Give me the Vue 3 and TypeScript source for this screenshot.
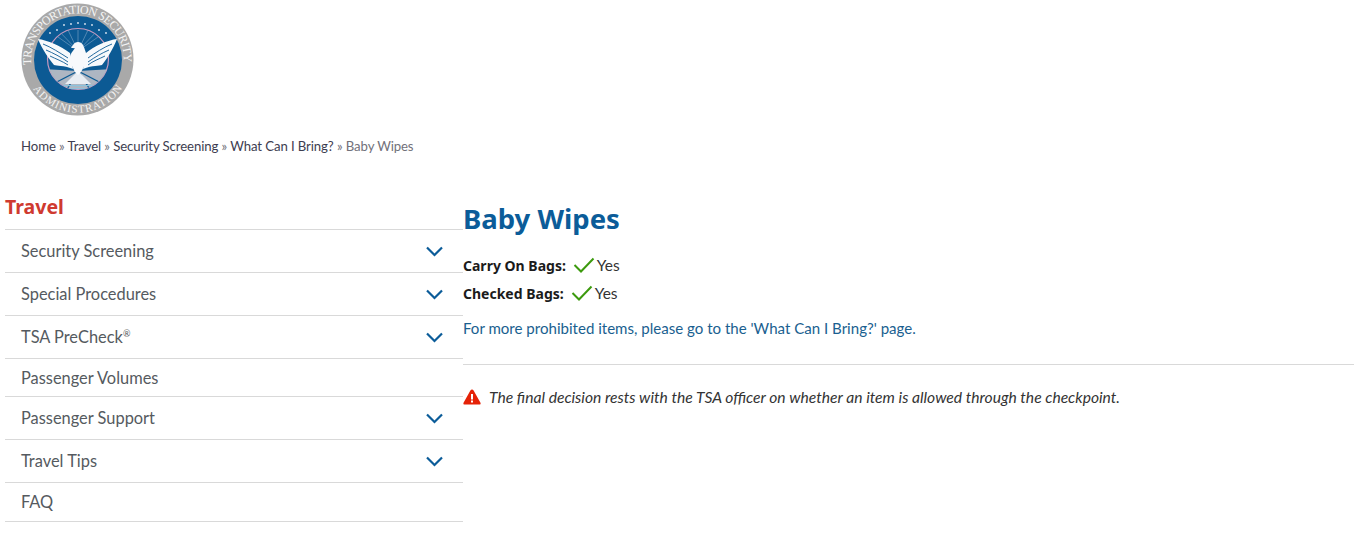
<script setup lang="ts">
interface NavItem { label: string; sup?: string; open: boolean; kind: 'tall' | 'short' | 'last' }
const items: NavItem[] = [
  { label: 'Security Screening', open: true, kind: 'tall' },
  { label: 'Special Procedures', open: true, kind: 'tall' },
  { label: 'TSA PreCheck', sup: '®', open: true, kind: 'tall' },
  { label: 'Passenger Volumes', open: false, kind: 'short' },
  { label: 'Passenger Support', open: true, kind: 'tall' },
  { label: 'Travel Tips', open: true, kind: 'tall' },
  { label: 'FAQ', open: false, kind: 'last' },
]
const crumbs = ['Home', 'Travel', 'Security Screening', 'What Can I Bring?']
const stars = [[-28, 5], [-21, 2], [-14, 0], [-7, -1], [0, -2], [7, -1], [14, 0], [21, 2], [28, 5]]
const rays = [-60, -40, -20, 0, 20, 40, 60]
</script>

<template>
  <div class="page">
    <header class="logo-wrap">
      <svg class="seal" viewBox="0 0 113 113" width="113" height="113" aria-label="Transportation Security Administration seal">
        <defs>
          <path id="arcTop" d="M 10.5 62 A 46.3 46.3 0 1 1 102.5 62" />
          <path id="arcBottom" d="M 11 84 A 53 53 0 0 0 102 84" />
          <clipPath id="inner"><circle cx="57" cy="56" r="30.5" /></clipPath>
        </defs>
        <circle cx="56.5" cy="56.5" r="56" fill="#a9a9a9" />
        <circle cx="57" cy="57" r="44" fill="#0c5a94" />
        <text class="seal-text"><textPath href="#arcTop" textLength="153" lengthAdjust="spacing">TRANSPORTATION SECURITY</textPath></text>
        <text class="seal-text small"><textPath href="#arcBottom" textLength="106" lengthAdjust="spacing" startOffset="2">ADMINISTRATION</textPath></text>
        <g fill="#dfe8f2">
          <circle v-for="(s, i) in stars" :key="i" :cx="57 + s[0]" :cy="22 + s[1] + (Math.abs(s[0]) > 20 ? 3 : 0)" r="0.9" />
        </g>
        <circle cx="57" cy="56" r="30.5" fill="#0c5a94" stroke="#c79ac0" stroke-width="1.2" />
        <g clip-path="url(#inner)">
          <g stroke="#7fa6c8" stroke-width="0.6">
            <line v-for="r in rays" :key="r" x1="57" y1="48" :x2="57 + r * 0.5" y2="27" />
          </g>
          <polygon points="57,68 22,66 26,86 88,86 92,66" fill="#aeb6c2" />
          <g stroke="#0c5a94" stroke-width="1.4">
            <line x1="57" y1="68" x2="30" y2="82" />
            <line x1="57" y1="68" x2="45" y2="88" />
            <line x1="57" y1="68" x2="84" y2="82" />
            <line x1="57" y1="68" x2="70" y2="88" />
          </g>
          <polygon points="57,68 44,81 70,81" fill="#e8edf3" />
          <rect x="40" y="82" width="34" height="1.2" fill="#8cc3dd" />
          <rect x="44" y="85" width="26" height="1.2" fill="#8cc3dd" />
        </g>
        <g fill="#f7f9fc">
          <path d="M17 36 C 26 37 40 43 49 50 L 52 66 C 42 62 36 63 33 62 C 28 56 21 46 17 36 Z" />
          <path d="M96 36 C 87 37 73 43 65 50 L 62 66 C 72 62 78 63 81 62 C 86 56 92 46 96 36 Z" />
          <path d="M52 42 C 54 38 60 38 62 42 C 63 44 65 49 66 54 C 65 60 62 66 60 69 L 57 72 L 54 69 C 52 65 49 60 49 54 C 50 49 53 47 54 45 L 50 45 Z" />
        </g>
        <g stroke="#0c5a94" stroke-width="0.9" fill="none">
          <path d="M22 41 C 30 44 39 50 47 55" />
          <path d="M25 47 C 32 50 40 54 47 59" />
          <path d="M29 53 C 35 56 41 58 47 62" />
          <path d="M91 41 C 83 44 74 50 67 55" />
          <path d="M88 47 C 81 50 74 54 67 59" />
          <path d="M84 53 C 78 56 72 58 67 62" />
        </g>
      </svg>
    </header>

    <nav class="breadcrumb">
      <template v-for="c in crumbs" :key="c">
        <a>{{ c }}</a><span class="sep"> » </span>
      </template>
      <span class="current">Baby Wipes</span>
    </nav>

    <div class="layout">
      <aside class="sidebar">
        <h2 class="side-title">Travel</h2>
        <ul class="menu">
          <li v-for="item in items" :key="item.label" class="menu-item" :class="item.kind">
            <span class="label">{{ item.label }}<sup v-if="item.sup">{{ item.sup }}</sup></span>
            <svg v-if="item.open" class="chev" viewBox="0 0 17 11" width="17" height="11">
              <path d="M1 1.5 L8.5 9 L16 1.5" fill="none" stroke="#0b5c99" stroke-width="2.2" />
            </svg>
          </li>
        </ul>
      </aside>

      <main class="content">
        <h1 class="title">Baby Wipes</h1>
        <p class="row">
          <strong>Carry On Bags:</strong>
          <svg class="check" viewBox="0 0 22 16" width="22" height="16"><path d="M1.5 8 L8 14.5 L20.5 1.5" fill="none" stroke="#3c9a0e" stroke-width="2" /></svg>
          <span>Yes</span>
        </p>
        <p class="row">
          <strong>Checked Bags:</strong>
          <svg class="check" viewBox="0 0 22 16" width="22" height="16"><path d="M1.5 8 L8 14.5 L20.5 1.5" fill="none" stroke="#3c9a0e" stroke-width="2" /></svg>
          <span>Yes</span>
        </p>
        <p class="more"><a>For more prohibited items, please go to the 'What Can I Bring?' page.</a></p>
        <hr class="rule" />
        <p class="warn">
          <svg viewBox="0 0 18 16" width="18" height="16">
            <path d="M9 .5 Q10 .5 10.6 1.6 L17.6 14 Q18 15.5 16.6 15.5 L1.4 15.5 Q0 15.5 .4 14 L7.4 1.6 Q8 .5 9 .5 Z" fill="#e52207" />
            <rect x="8" y="5" width="2" height="5.5" fill="#fff" />
            <rect x="8" y="11.5" width="2" height="2" fill="#fff" />
          </svg>
          <em>The final decision rests with the TSA officer on whether an item is allowed through the checkpoint.</em>
        </p>
      </main>
    </div>
  </div>
</template>

<style>
html, body { margin: 0; background: #fff; }
</style>

<style scoped>
.page {
  font-family: "Lato", "Noto Sans", sans-serif;
  color: #333;
  height: 551px;
  overflow: hidden;
}
.logo-wrap { padding: 3px 0 0 21px; height: 121px; box-sizing: border-box; }
.seal { display: block; }
.seal-text { font-family: "Liberation Serif", serif; font-size: 12px; fill: #f4f4f4; }
.seal-text.small { font-size: 11px; }
.breadcrumb {
  padding-left: 21px;
  font-size: 13.2px;
  letter-spacing: -0.1px;
  line-height: 20px;
  height: 20px;
  margin-top: 15px;
  color: #3d3d50;
  white-space: pre;
}
.sep, .current { color: #71717a; }
.layout { display: flex; margin-top: 29px; padding-left: 5px; }
.sidebar { width: 458px; flex: none; }
.side-title {
  margin: 0;
  font-family: "Noto Sans", sans-serif;
  font-size: 19.5px;
  line-height: 28px;
  padding-top: 8px;
  padding-bottom: 8px;
  font-weight: 700;
  color: #cf3a30;
}
.menu { list-style: none; margin: 0; padding: 0; border-top: 1px solid #d9d9d9; }
.menu-item {
  display: flex;
  align-items: center;
  justify-content: space-between;
  padding: 0 20px 0 16px;
  border-bottom: 1px solid #d9d9d9;
  font-size: 16.4px;
  color: #555a60;
  box-sizing: border-box;
}
.menu-item.tall { height: 43px; }
.menu-item.short { height: 38px; }
.menu-item.last { height: 39px; }
.menu-item.tall .label, .menu-item.last .label { margin-bottom: 2px; }
.menu-item sup { font-size: 9px; line-height: 0; }
.chev { display: block; }
.content { flex: 1; min-width: 0; }
.title {
  margin: 0;
  padding-top: 15px;
  font-family: "Noto Sans", sans-serif;
  font-size: 27.5px;
  line-height: 38px;
  font-weight: 700;
  color: #0b5c99;
}
.row {
  margin: 0;
  height: 28px;
  display: flex;
  align-items: center;
  font-size: 15.5px;
  color: #333;
}
.content .row:first-of-type { margin-top: 13px; }
.row strong { font-family: "Noto Sans", sans-serif; font-size: 14px; color: #1b1b1b; margin-right: 7px; }
.row span { margin-left: 2px; }
.check { display: block; }
.more { margin: 10px 0 0; font-size: 15.07px; line-height: 22px; color: #1a5f90; }
.rule { border: 0; border-top: 1px solid #d9d9d9; margin: 25px 0 0; }
.warn {
  margin: 21px 0 0;
  display: flex;
  align-items: center;
  gap: 8px;
  font-size: 15.65px;
  line-height: 22px;
  color: #333;
}
.warn svg { display: block; flex: none; }
</style>
